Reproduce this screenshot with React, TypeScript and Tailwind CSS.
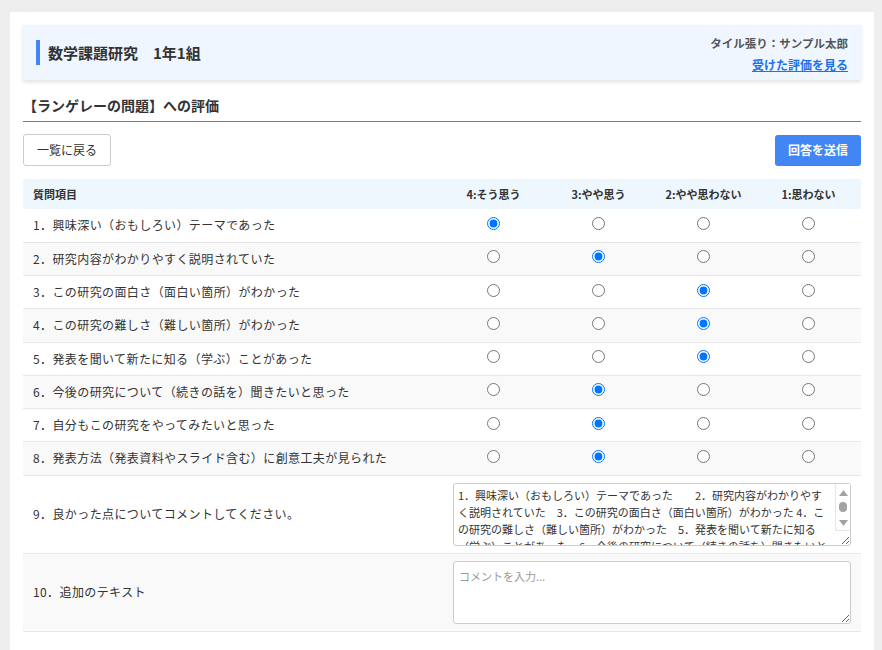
import React from "react";

const questions = [
  { label: "1．興味深い（おもしろい）テーマであった", value: 4 },
  { label: "2．研究内容がわかりやすく説明されていた", value: 3 },
  { label: "3．この研究の面白さ（面白い箇所）がわかった", value: 2 },
  { label: "4．この研究の難しさ（難しい箇所）がわかった", value: 2 },
  { label: "5．発表を聞いて新たに知る（学ぶ）ことがあった", value: 2 },
  { label: "6．今後の研究について（続きの話を）聞きたいと思った", value: 3 },
  { label: "7．自分もこの研究をやってみたいと思った", value: 3 },
  { label: "8．発表方法（発表資料やスライド含む）に創意工夫が見られた", value: 3 },
];

const comment =
  "1．興味深い（おもしろい）テーマであった　　2．研究内容がわかりやすく説明されていた　3．この研究の面白さ（面白い箇所）がわかった 4．この研究の難しさ（難しい箇所）がわかった　5．発表を聞いて新たに知る（学ぶ）ことがあった　6．今後の研究について（続きの話を）聞きたいと思った　7．自分もこの研究をやってみたいと思った　8．発表方法（発表資料やスライド含む）に創意工夫が見られた";

export default function App() {
  const font = { fontFamily: '"Noto Sans CJK JP", "Noto Sans", sans-serif' };
  return (
    <div className="min-h-[650px] bg-[#eeeeee] pt-3 pl-[10px]" style={font}>
      <div className="w-[864px] bg-white px-[13px] pt-[13px] pb-6 text-[#333]">
        <div className="flex h-[55px] items-center justify-between bg-[#eff6ff] pl-[13px] pr-[13px] shadow-[0_2px_4px_rgba(0,0,0,0.12)]">
          <div className="flex items-center">
            <div className="mr-2 h-[25px] w-1 bg-[#4285f4]" />
            <div className="text-[15px] font-bold leading-5">数学課題研究　1年1組</div>
          </div>
          <div className="flex flex-col items-end pt-[2px]">
            <div className="text-[11.5px] font-bold leading-4 text-[#555]">タイル張り：サンプル太郎</div>
            <a href="#" className="mt-[6px] text-[12px] font-bold leading-4 text-[#1a73e8] underline">
              受けた評価を見る
            </a>
          </div>
        </div>

        <div className="border-b border-[#4a80d8] pt-[15px] pb-[6px] text-[14px] font-bold leading-5">
          【ランゲレーの問題】への評価
        </div>

        <div className="mt-3 flex items-center justify-between">
          <button className="h-8 rounded-[3px] border border-[#cccccc] bg-white px-[13px] text-[12px] text-[#333]">
            一覧に戻る
          </button>
          <button className="h-[31px] rounded-[3px] bg-[#4285f4] px-[13px] text-[12px] font-bold text-white">
            回答を送信
          </button>
        </div>

        <table className="mt-[13px] w-[838px] table-fixed border-collapse">
          <colgroup>
            <col className="w-[418px]" />
            <col className="w-[105px]" />
            <col className="w-[105px]" />
            <col className="w-[105px]" />
            <col className="w-[105px]" />
          </colgroup>
          <thead>
            <tr className="h-[30px] bg-[#eef6fe] text-[11px] font-bold text-[#333]">
              <th className="pl-[10px] text-left font-bold">質問項目</th>
              <th className="text-center font-bold">4:そう思う</th>
              <th className="text-center font-bold">3:やや思う</th>
              <th className="text-center font-bold">2:やや思わない</th>
              <th className="text-center font-bold">1:思わない</th>
            </tr>
          </thead>
          <tbody>
            {questions.map((q, i) => (
              <tr
                key={i}
                className={`h-[33.25px] border-b border-[#e8e8e8] ${i % 2 === 1 ? "bg-[#f9f9f9]" : "bg-white"}`}
              >
                <td className="pl-[10px] text-[12px] tracking-[0.4px] text-[#333]">{q.label}</td>
                {[4, 3, 2, 1].map((v) => (
                  <td key={v} className="text-center">
                    <div className="flex items-center justify-center pb-[4px]">
                      <input
                        type="radio"
                        name={`q${i}`}
                        defaultChecked={q.value === v}
                        className="m-0 block h-[13px] w-[13px]"
                      />
                    </div>
                  </td>
                ))}
              </tr>
            ))}
            <tr className="h-[78px] border-b border-[#e8e8e8] bg-white">
              <td className="pl-[10px] text-[12px] tracking-[0.4px] text-[#333]">9．良かった点についてコメントしてください。</td>
              <td colSpan={4} className="pl-3 pr-[10px]">
                <div className="relative">
                  <textarea
                    className="block h-[63px] w-full resize-y overflow-hidden rounded-[3px] border border-[#cccccc] bg-white pt-[3px] pr-[19px] pb-[3px] pl-[4px] text-[11px] leading-[17px] text-[#333] outline-none"
                    defaultValue={comment}
                  />
                  <div className="pointer-events-none absolute top-[1px] right-[1px] flex h-[47px] w-[15px] flex-col items-center border-b border-l border-[#e6e6e6] bg-white pt-[6px]">
                    <svg width="9" height="6" viewBox="0 0 9 6">
                      <path d="M4.5 0 L9 6 L0 6 Z" fill="#a3a3a3" />
                    </svg>
                    <div className="mt-[6px] h-[10px] w-[8px] rounded-full bg-[#a3a3a3]" />
                    <svg className="mt-[8px]" width="9" height="6" viewBox="0 0 9 6">
                      <path d="M0 0 L9 0 L4.5 6 Z" fill="#a3a3a3" />
                    </svg>
                  </div>
                </div>
              </td>
            </tr>
            <tr className="h-[78px] border-b border-[#e8e8e8] bg-[#f9f9f9]">
              <td className="pl-[10px] text-[12px] tracking-[0.4px] text-[#333]">10．追加のテキスト</td>
              <td colSpan={4} className="pl-3 pr-[10px]">
                <textarea
                  className="block h-[63px] w-full resize-y rounded-[3px] border border-[#cccccc] bg-white px-[5px] py-[6px] text-[11px] leading-[17px] text-[#333] outline-none placeholder:text-[#999]"
                  placeholder="コメントを入力..."
                />
              </td>
            </tr>
          </tbody>
        </table>
      </div>
    </div>
  );
}
